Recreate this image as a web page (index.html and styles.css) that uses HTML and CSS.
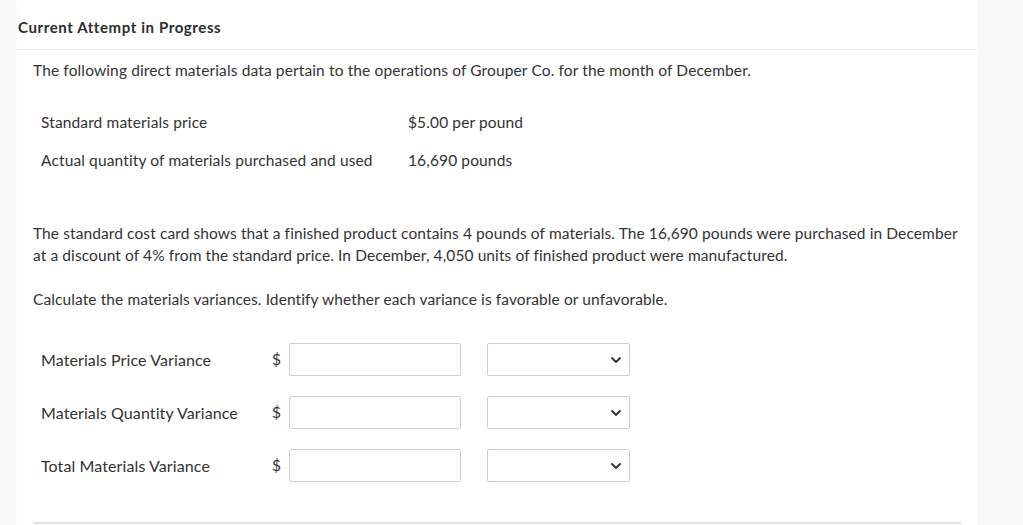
FILE: index.html
```html
<!DOCTYPE html>
<html lang="en">
<head>
<meta charset="utf-8">
<title>Current Attempt in Progress</title>
<link rel="stylesheet" href="styles.css">
</head>
<body>
<div class="page">
  <main class="panel">
    <header class="head">Current Attempt in Progress</header>
    <section class="content">
      <p class="intro">The following direct materials data pertain to the operations of Grouper Co. for the month of December.</p>
      <div class="data">
        <div class="data-row">
          <span class="data-label">Standard materials price</span>
          <span class="data-value">$5.00 per pound</span>
        </div>
        <div class="data-row">
          <span class="data-label">Actual quantity of materials purchased and used</span>
          <span class="data-value">16,690 pounds</span>
        </div>
      </div>
      <p class="para">The standard cost card shows that a finished product contains 4 pounds of materials. The 16,690 pounds were purchased in December at a discount of 4% from the standard price. In December, 4,050 units of finished product were manufactured.</p>
      <p class="para gap">Calculate the materials variances. Identify whether each variance is favorable or unfavorable.</p>
      <div class="answers">
        <div class="answer-row">
          <span class="a-label">Materials Price Variance</span>
          <span class="dollar">$</span>
          <span class="input"></span>
          <span class="select"><svg class="chev" width="10" height="6" viewBox="0 0 10 6"><path d="M1 1l4 4 4-4" fill="none" stroke="#333" stroke-width="1.8" stroke-linecap="round" stroke-linejoin="round"/></svg></span>
        </div>
        <div class="answer-row">
          <span class="a-label">Materials Quantity Variance</span>
          <span class="dollar">$</span>
          <span class="input"></span>
          <span class="select"><svg class="chev" width="10" height="6" viewBox="0 0 10 6"><path d="M1 1l4 4 4-4" fill="none" stroke="#333" stroke-width="1.8" stroke-linecap="round" stroke-linejoin="round"/></svg></span>
        </div>
        <div class="answer-row">
          <span class="a-label">Total Materials Variance</span>
          <span class="dollar">$</span>
          <span class="input"></span>
          <span class="select"><svg class="chev" width="10" height="6" viewBox="0 0 10 6"><path d="M1 1l4 4 4-4" fill="none" stroke="#333" stroke-width="1.8" stroke-linecap="round" stroke-linejoin="round"/></svg></span>
        </div>
      </div>
      <div class="rule"></div>
    </section>
  </main>
</div>
</body>
</html>
```

FILE: styles.css
```css
* { box-sizing: border-box; }
html, body {
  margin: 0;
  padding: 0;
  background: #f8f8f8;
}
body {
  font-family: Lato, "Open Sans", sans-serif;
  color: #333;
  font-size: 15.5px;
  letter-spacing: 0.13px;
  line-height: 22px;
}
.page {
  display: flex;
  height: 525px;
  overflow: hidden;
  background: #f8f8f8;
}
.panel {
  margin-left: 17px;
  width: 960px;
  background: #fff;
}
.head {
  font-weight: 700;
  font-size: 15px;
  letter-spacing: 0.6px;
  line-height: 20px;
  color: #2d2d2d;
  padding: 17px 1px 12px;
  border-bottom: 1px solid #ececec;
}
.content {
  padding: 0 16px;
}
p { margin: 0; }
.intro {
  margin-top: 9px;
}
.data {
  margin-top: 22px;
  display: flex;
  flex-direction: column;
}
.data-row {
  display: flex;
  padding: 8px 0 8px 8px;
}
.data-label {
  width: 367px;
}
.para {
  margin-top: 43px;
  margin-right: -6px;
  letter-spacing: 0.1px;
}
.para.gap {
  margin-top: 22px;
}
.answers {
  margin-top: 33px;
  display: flex;
  flex-direction: column;
  gap: 20px;
  padding-left: 8px;
}
.answer-row {
  display: flex;
  align-items: center;
  height: 33px;
}
.a-label {
  width: 231px;
  font-size: 16px;
  letter-spacing: 0.1px;
}
.dollar {
  width: 17px;
  position: relative;
  top: -1px;
}
.input {
  width: 172px;
  height: 33px;
  border: 1px solid #cfcfcf;
  border-radius: 2px;
  background: #fff;
}
.select {
  margin-left: 26px;
  width: 143px;
  height: 33px;
  border: 1px solid #cfcfcf;
  border-radius: 2px;
  background: #fff;
  display: flex;
  align-items: center;
  justify-content: flex-end;
  padding-right: 8px;
}
.chev { display: block; }
.rule {
  margin-top: 40px;
  height: 2px;
  background: #e2e2e2;
}
```
